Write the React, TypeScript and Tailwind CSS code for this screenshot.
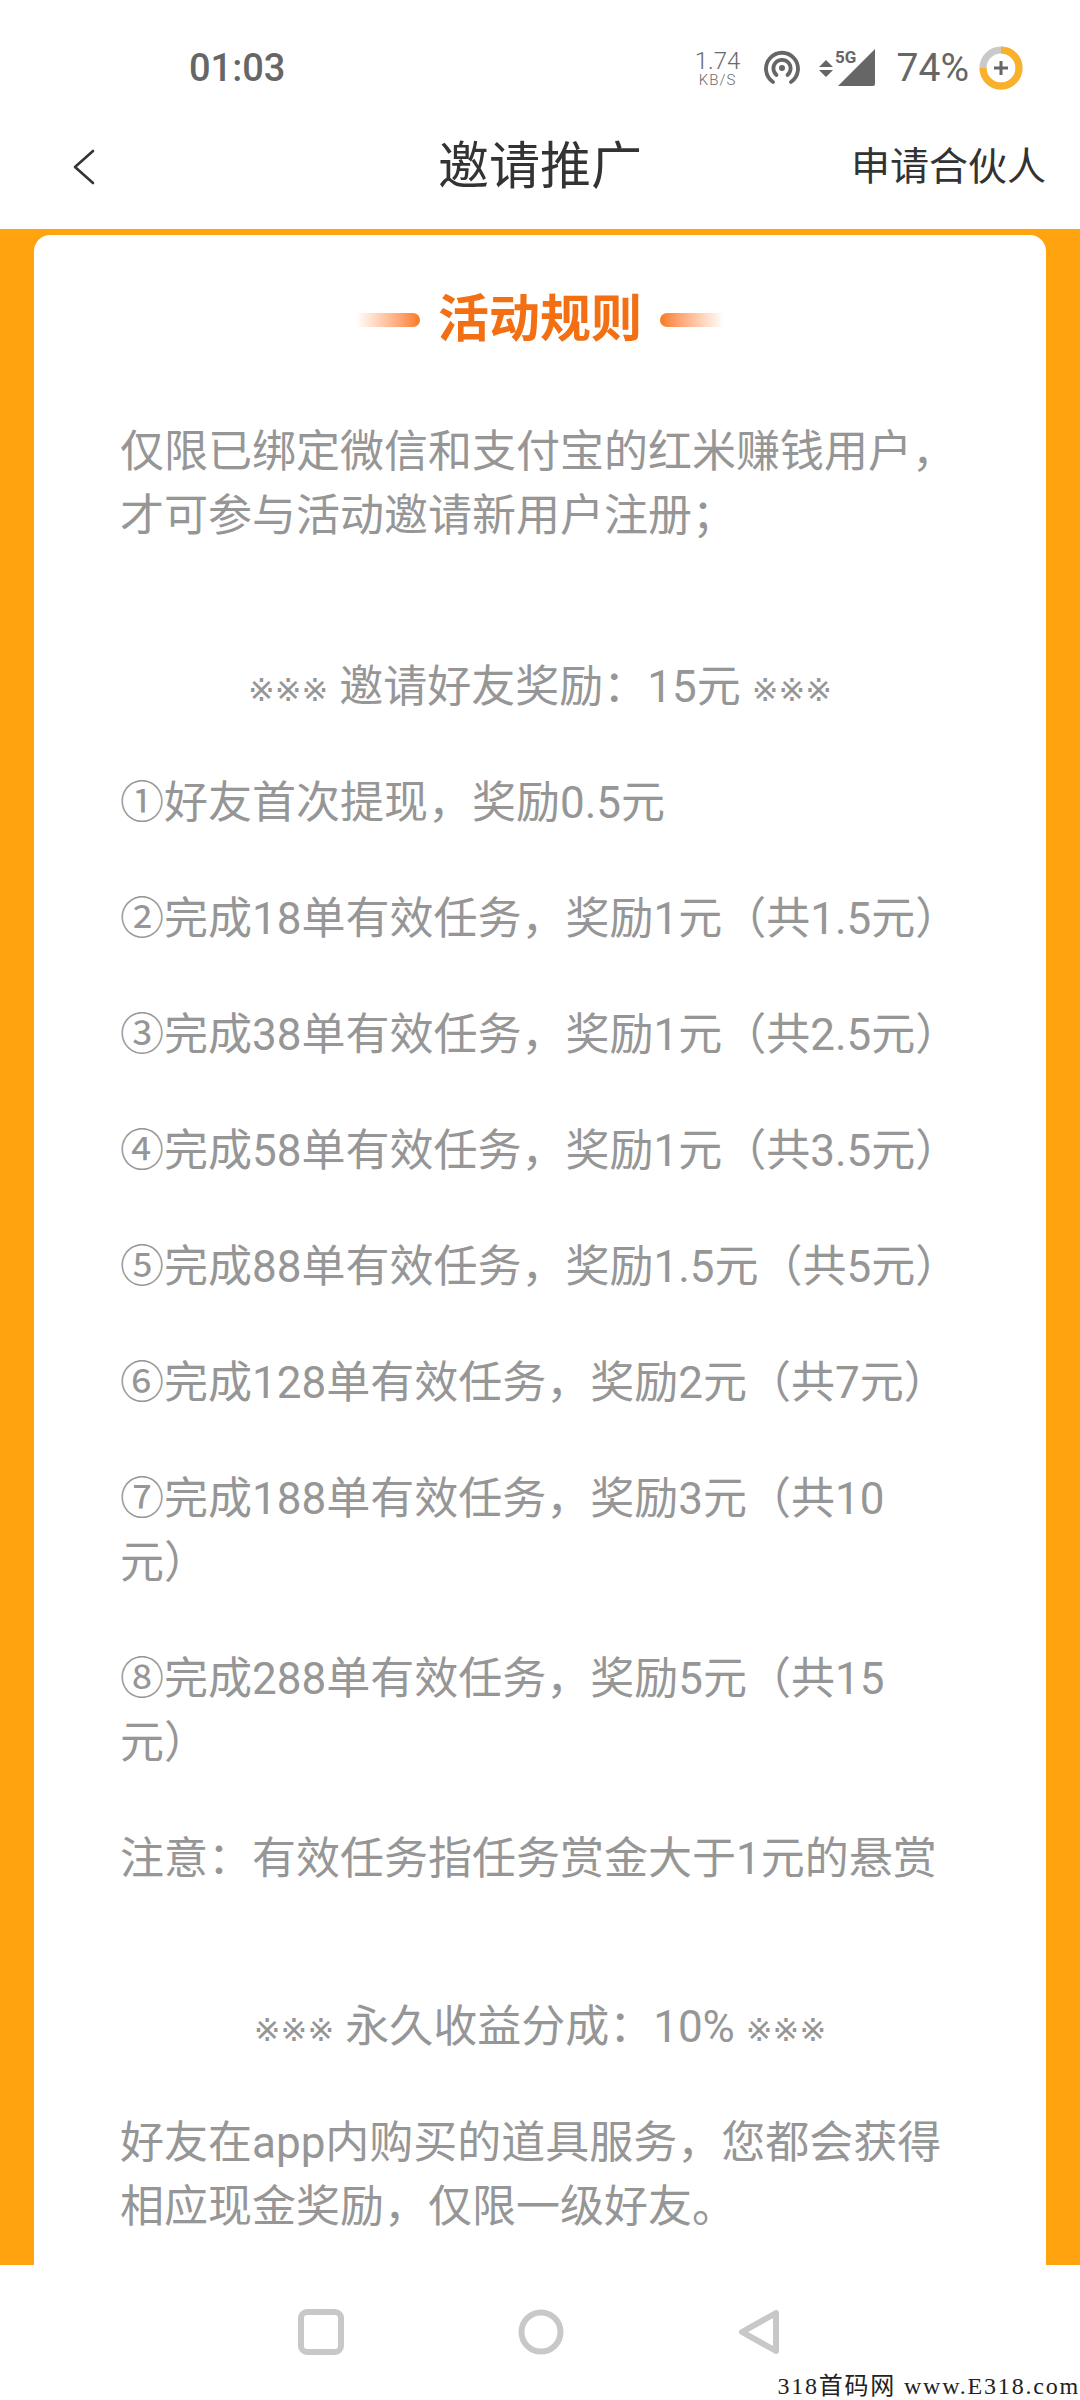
import React from "react";

const cjk = { fontFamily: '"Roboto","Noto Sans CJK SC",sans-serif' };

const rows: string[] = [
  "①好友首次提现，奖励0.5元",
  "②完成18单有效任务，奖励1元（共1.5元）",
  "③完成38单有效任务，奖励1元（共2.5元）",
  "④完成58单有效任务，奖励1元（共3.5元）",
  "⑤完成88单有效任务，奖励1.5元（共5元）",
  "⑥完成128单有效任务，奖励2元（共7元）",
  "⑦完成188单有效任务，奖励3元（共10元）",
  "⑧完成288单有效任务，奖励5元（共15元）",
];

function Marks() {
  return <span className="text-[32px] leading-[44px] align-[1px]" style={{ fontFamily: '"DejaVu Sans",sans-serif' }}>※※※</span>;
}

function StatusIcons() {
  return (
    <div className="flex items-center">
      <div className="flex flex-col items-center text-[#6b6b6b] w-[46px]">
        <span className="text-[24px] leading-[24px] font-light whitespace-nowrap">1.74</span>
        <span className="text-[15px] leading-[15px] tracking-[1px] font-light whitespace-nowrap">KB/S</span>
      </div>
      <svg className="ml-[23px]" width="36" height="36" viewBox="0 0 36 36" fill="none" stroke="#666" strokeWidth="3.8" strokeLinecap="round">
        <path d="M9 32A16 16 0 1 1 27 32" />
        <path d="M12.5 25A8.6 8.6 0 1 1 23.5 25" />
        <circle cx="18" cy="18" r="3" fill="#666" stroke="none" />
      </svg>
      <svg className="ml-[19px]" width="57" height="46" viewBox="0 -4 57 46">
        <path d="M7 11l7 7H0zM7 28l7-7H0z" fill="#666" />
        <path d="M56 0v35a2 2 0 0 1-2 2H19z" fill="#666" />
        <text x="16" y="14" fontSize="17" fontWeight="700" fill="#666" fontFamily="Roboto">5G</text>
      </svg>
      <span className="ml-[21px] text-[39px] leading-[44px] text-[#666]">74%</span>
      <svg className="ml-[10px]" width="44" height="44" viewBox="0 0 44 44" fill="none">
        <circle cx="22" cy="22" r="18" stroke="#c9c9c9" strokeWidth="7" />
        <path d="M22 4A18 18 0 1 1 4 22" stroke="#fbb02a" strokeWidth="7" />
        <path d="M15 22h14M22 15v14" stroke="#666" strokeWidth="3" />
      </svg>
    </div>
  );
}

export default function App() {
  return (
    <div className="relative w-[1080px] h-[2400px] flex flex-col bg-white overflow-hidden" style={cjk}>
      <div className="h-[44px] mt-[46px] flex items-center justify-between pl-[189px] pr-[57px]">
        <span className="text-[38px] leading-[44px] font-medium text-[#666]">01:03</span>
        <StatusIcons />
      </div>
      <div className="h-[139px] grid grid-cols-[1fr_auto_1fr] items-center pt-[15px]">
        <div className="pl-[72px]">
          <svg className="block" width="24" height="36" viewBox="0 0 24 36" fill="none" stroke="#333" strokeWidth="2.6" strokeLinecap="round" strokeLinejoin="round">
            <path d="M21 2L3 18l18 16" />
          </svg>
        </div>
        <span className="text-[51px] leading-[60px] text-[#333]">邀请推广</span>
        <div className="pr-[34px] text-right text-[39px] leading-[50px] text-[#333]">申请合伙人</div>
      </div>
      <div className="h-[2036px] bg-[#ffa30f] pt-[6px] px-[34px]">
        <div className="h-full bg-white rounded-t-[16px] pt-[58px] px-[86px]">
          <div className="flex items-center justify-center h-[54px]">
            <div className="w-[64px] h-[14px] rounded-r-full bg-gradient-to-r from-[#ffffff] to-[#f77a1a]" />
            <span className="mx-[18px] text-[51px] leading-[54px] font-bold text-[#f36f14]">活动规则</span>
            <div className="w-[64px] h-[14px] rounded-l-full bg-gradient-to-l from-[#ffffff] to-[#f77a1a]" />
          </div>
          <div className="text-[44px] leading-[64px] text-[#969696] [text-spacing-trim:space-all]">
            <p className="mt-[73px]">仅限已绑定微信和支付宝的红米赚钱用户，才可参与活动邀请新用户注册；</p>
            <p className="mt-[107px] text-center"><Marks /> 邀请好友奖励：15元 <Marks /></p>
            {rows.map((r) => (
              <p key={r} className="mt-[52px]">{r}</p>
            ))}
            <p className="mt-[52px]">注意：有效任务指任务赏金大于1元的悬赏</p>
            <p className="mt-[104px] text-center"><Marks /> 永久收益分成：10% <Marks /></p>
            <p className="mt-[52px]">好友在app内购买的道具服务，您都会获得相应现金奖励，仅限一级好友。</p>
          </div>
        </div>
      </div>
      <div className="flex-1 flex items-start justify-center gap-[174px] pt-[44px] pl-[2px]">
        <svg width="46" height="46" viewBox="0 0 46 46" fill="none" stroke="#c8c8c8" strokeWidth="6">
          <rect x="3" y="3" width="40" height="40" rx="6" />
        </svg>
        <svg width="46" height="46" viewBox="0 0 46 46" fill="none" stroke="#c8c8c8" strokeWidth="6">
          <circle cx="23" cy="23" r="19.5" />
        </svg>
        <svg width="46" height="46" viewBox="0 0 46 46" fill="none" stroke="#c8c8c8" strokeWidth="6" strokeLinejoin="round">
          <path d="M38 4v38L4 23z" />
        </svg>
      </div>
      <span className="absolute right-0 bottom-0 text-[24px] leading-[28px] tracking-[1.8px] text-[#222] whitespace-nowrap" style={{ fontFamily: '"Liberation Serif","Noto Sans CJK SC",serif' }}>318首码网 www.E318.com</span>
    </div>
  );
}
